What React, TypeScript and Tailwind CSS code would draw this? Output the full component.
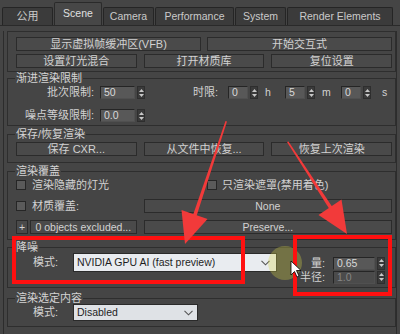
import React from "react";

function Arrows() {
  return (
    <div className="ml-[2px] w-[8px] h-[13px] bg-[#3a3a3a] border border-[#2e2e2e] flex flex-col items-center justify-center gap-[2px]">
      <svg width="5" height="3" viewBox="0 0 5 3"><path d="M2.5 0L5 3H0z" fill="#c8c8c8" /></svg>
      <svg width="5" height="3" viewBox="0 0 5 3"><path d="M0 0h5L2.5 3z" fill="#c8c8c8" /></svg>
    </div>
  );
}

function Spin({ value, w, dim }: { value: string; w: string; dim?: boolean }) {
  return (
    <div className="flex items-center h-[13px]">
      <div
        className={
          w +
          " h-[13px] border-t border-l border-[#252525] border-b border-r border-b-[#505050] border-r-[#505050] flex items-center pl-[3px] leading-[11px] text-[10.5px] " +
          (dim ? "bg-[#4b4b4b] text-[#858585]" : "bg-[#585858] text-[#d8d8d8]")
        }
      >
        {value}
      </div>
      <Arrows />
    </div>
  );
}

function Btn({ children, className }: { children: React.ReactNode; className?: string }) {
  return (
    <div
      className={
        "h-[14px] bg-[#4a4a4a] border border-[#2b2b2b] flex items-center justify-center leading-[12px] text-[#d2d2d2] " +
        (className || "")
      }
    >
      {children}
    </div>
  );
}

function Check() {
  return <div className="w-[10px] h-[10px] bg-[#5a5a5a] border border-[#262626] shrink-0" />;
}

function Title({ children }: { children: React.ReactNode }) {
  return (
    <div className="-mt-[7px] ml-[7px] px-[1px] w-fit h-[13px] leading-[13px] bg-[#454545] text-[#d4d4d4]">
      {children}
    </div>
  );
}

function Chevron() {
  return (
    <svg width="9" height="6" viewBox="0 0 9 6" className="shrink-0">
      <path d="M0.5 0.8L4.5 4.8L8.5 0.8" stroke="#555" strokeWidth="1.1" fill="none" />
    </svg>
  );
}

function Tab({ label, w, active }: { label: string; w: string; active?: boolean }) {
  return (
    <div
      className={
        w +
        " flex items-center justify-center border border-b-0 rounded-t-[2px] " +
        (active
          ? "h-[23px] bg-[#474747] border-[#2a2a2a] text-[#e0e0e0]"
          : "h-[18px] bg-[#3b3b3b] border-[#252525] text-[#cacaca]")
      }
    >
      {label}
    </div>
  );
}

const L = "text-[10.5px]";

export default function App() {
  return (
    <div className="relative w-[400px] h-[334px] overflow-hidden bg-[#454545] text-[11px] text-[#d2d2d2] font-['Liberation_Sans','Noto_Sans_CJK_SC',sans-serif]">
      {/* tabs */}
      <div className="h-[26px] flex items-end pl-[2px] gap-[1px] border-b border-[#2a2a2a] text-[10.5px]">
        <div className="w-[51px] h-[18px] flex items-center justify-center border border-b-0 rounded-t-[2px] bg-[#3b3b3b] border-[#252525] text-[#cacaca] text-[11px]">公用</div>
        <Tab label="Scene" w="w-[48px]" active />
        <Tab label="Camera" w="w-[51px]" />
        <Tab label="Performance" w="w-[79px]" />
        <Tab label="System" w="w-[51px]" />
        <Tab label="Render Elements" w="w-[106px]" />
      </div>

      {/* panel */}
      <div className="mx-[3px] h-[305px] border-l border-r border-b border-[#2c2c2c]">
        {/* box 1 */}
        <div className="ml-[3px] mt-[5px] border border-[#2e2e2e] pl-[8px] pr-[3px] pt-[5px] pb-[3px]">
          <div className="grid grid-cols-2 gap-[6px]">
            <Btn>显示虚拟帧缓冲区(VFB)</Btn>
            <Btn>开始交互式</Btn>
          </div>
          <div className="grid grid-cols-3 gap-[7px] mt-[3px]">
            <Btn>设置灯光混合</Btn>
            <Btn>打开材质库</Btn>
            <Btn>复位设置</Btn>
          </div>
        </div>

        {/* box 2 */}
        <div className="ml-[3px] mt-[6px] h-[48px] border border-[#2e2e2e]">
          <Title>渐进渲染限制</Title>
          <div className="flex items-center h-[13px] mt-[1px]">
            <div className="w-[86px] text-right">批次限制:</div>
            <div className="ml-[6px]"><Spin value="50" w="w-[35px]" /></div>
            <div className="ml-[48px] w-[26px]">时限:</div>
            <div className="ml-[9px]"><Spin value="0" w="w-[20px]" /></div>
            <div className={"ml-[7px] w-[8px] " + L}>h</div>
            <div className="ml-[12px]"><Spin value="5" w="w-[20px]" /></div>
            <div className={"ml-[7px] w-[10px] " + L}>m</div>
            <div className="ml-[9px]"><Spin value="0" w="w-[20px]" /></div>
            <div className={"ml-[11px] " + L}>s</div>
          </div>
          <div className="flex items-center h-[13px] mt-[10px]">
            <div className="w-[86px] text-right">噪点等级限制:</div>
            <div className="ml-[6px]"><Spin value="0.0" w="w-[35px]" /></div>
          </div>
        </div>

        {/* box 3 */}
        <div className="ml-[3px] mt-[8px] border border-[#2e2e2e] pl-[8px] pr-[3px] pb-[6px]">
          <div className="-ml-[8px]"><Title>保存/恢复渲染</Title></div>
          <div className="grid grid-cols-3 gap-[7px] mt-[1px]">
            <Btn>保存 CXR...</Btn>
            <Btn>从文件中恢复...</Btn>
            <Btn>恢复上次渲染</Btn>
          </div>
        </div>

        {/* box 4 */}
        <div className="ml-[3px] mt-[8px] border border-[#2e2e2e] pl-[8px] pr-[3px] pb-[5px]">
          <div className="-ml-[8px]"><Title>渲染覆盖</Title></div>
          <div className="grid grid-cols-2 gap-[6px] mt-[1px] h-[12px] items-center">
            <div className="flex items-center">
              <Check />
              <span className="ml-[6px] leading-[12px]">渲染隐藏的灯光</span>
            </div>
            <div className="flex items-center">
              <Check />
              <span className="ml-[5px] leading-[12px]">只渲染遮罩(禁用着色)</span>
            </div>
          </div>
          <div className="grid grid-cols-3 gap-[7px] mt-[8px] items-center">
            <div className="flex items-center">
              <Check />
              <span className="ml-[6px] leading-[12px]">材质覆盖:</span>
            </div>
            <Btn className={"col-span-2 text-[#b8b8b8] " + L}>None</Btn>
          </div>
          <div className="grid grid-cols-3 gap-[7px] mt-[7px]">
            <div className="flex">
              <Btn className={"w-[12px] " + L}>+</Btn>
              <Btn className={"ml-[2px] flex-1 " + L}>0 objects excluded...</Btn>
            </div>
            <Btn className={"col-span-2 text-[#b8b8b8] " + L}>Preserve...</Btn>
          </div>
        </div>

        {/* box 5 */}
        <div className="ml-[3px] mt-[7px] border border-[#2e2e2e] pb-[4px]">
          <Title>降噪</Title>
          <div className="flex items-start -mt-[1px]">
            <div className="flex items-center h-[19px]">
              <div className="w-[50px] text-right">模式:</div>
              <div className={"ml-[15px] w-[204px] h-[19px] bg-[#e9ecf0] border border-[#2a2a2a] flex items-center pl-[3px] pr-[6px] text-[#1e1e1e] " + L}>
                <span className="flex-1">NVIDIA GPU AI (fast preview)</span>
                <Chevron />
              </div>
            </div>
            <div className="ml-[18px] mt-[4px] flex flex-col gap-[2px]">
              <div className="flex items-center h-[12px]">
                <div className="w-[30px] text-right">量:</div>
                <div className="ml-[8px]"><Spin value="0.65" w="w-[42px]" /></div>
              </div>
              <div className="flex items-center h-[12px]">
                <div className="w-[30px] text-right">半径:</div>
                <div className="ml-[8px]"><Spin value="1.0" w="w-[42px]" dim /></div>
              </div>
            </div>
          </div>
        </div>

        {/* box 6 */}
        <div className="ml-[3px] mt-[10px] border border-[#2e2e2e] pb-[5px]">
          <Title>渲染选定内容</Title>
          <div className="flex items-center h-[17px] -mt-[1px]">
            <div className="w-[50px] text-right">模式:</div>
            <div className={"ml-[15px] w-[125px] h-[17px] bg-[#dfe2e6] border border-[#2a2a2a] flex items-center pl-[3px] pr-[4px] text-[#1e1e1e] " + L}>
              <span className="flex-1">Disabled</span>
              <Chevron />
            </div>
          </div>
        </div>
      </div>

      {/* annotations overlay */}
      <svg className="absolute left-0 top-0 pointer-events-none" width="400" height="334" viewBox="0 0 400 334">
        <circle cx="285" cy="263" r="17" fill="rgba(215,210,70,0.32)" />
        <rect x="14" y="238" width="229" height="44" fill="none" stroke="#ff1010" strokeWidth="4" />
        <rect x="295" y="237" width="95" height="57" fill="none" stroke="#ff1010" strokeWidth="4" />
        {/* arrow 1 */}
        <polygon points="225.5,121 227,121.5 196.5,216 193,215" fill="#f23a3a" />
        <polygon points="181.5,210 207.5,219 185,244" fill="#f23a3a" />
        {/* arrow 2 */}
        <polygon points="287,142 288.5,141.5 333,208 330,210" fill="#f23a3a" />
        <polygon points="318.5,215 341.5,199.5 347,234" fill="#f23a3a" />
        {/* cursor */}
        <g transform="translate(291,261)">
          <path d="M0 0V14L3.5 10.5L6 16L8 15L5.5 9.5H10Z" fill="#fff" stroke="#000" strokeWidth="0.8" />
        </g>
      </svg>
    </div>
  );
}
